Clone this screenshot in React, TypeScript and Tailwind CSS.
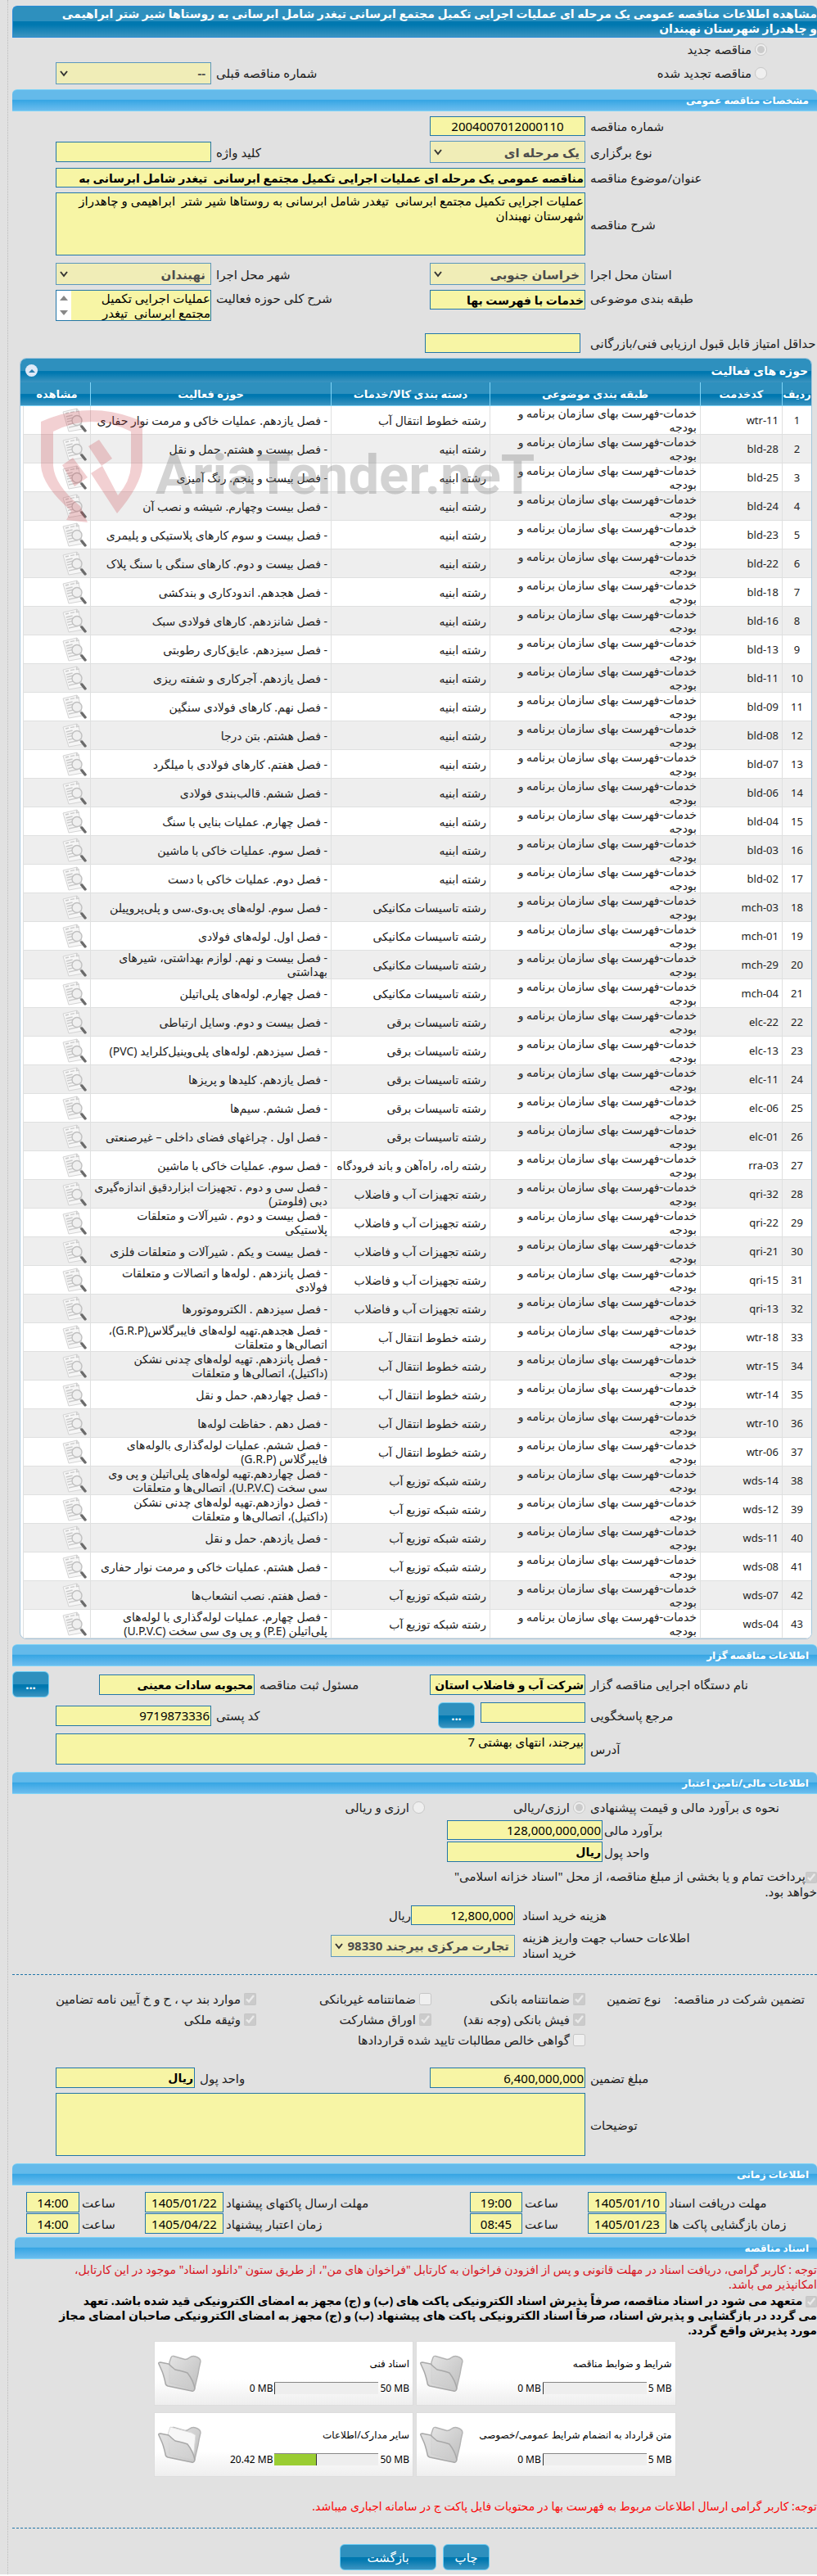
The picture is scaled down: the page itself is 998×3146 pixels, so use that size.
import { ReactNode, useId } from 'react'
import clsx from 'clsx'

interface IActivity {
  code: string
  category: string
  activity: string
}

interface IFolder {
  title: string
  used: number
  max: number
}

const BUILDING = 'رشته ابنیه'
const MECHANICAL = 'رشته تاسیسات مکانیکی'
const ELECTRICAL = 'رشته تاسیسات برقی'
const ROAD = 'رشته راه، راه‌آهن و باند فرودگاه'
const EQUIPMENT = 'رشته تجهیزات آب و فاضلاب'
const TRANSFER = 'رشته خطوط انتقال آب'
const NETWORK = 'رشته شبکه توزیع آب'

const activities: IActivity[] = [
  { code: 'wtr-11', category: TRANSFER, activity: '- فصل یازدهم. عملیات خاکی و مرمت نوار حفاری' },
  { code: 'bld-28', category: BUILDING, activity: '- فصل بیست و هشتم. حمل و نقل' },
  { code: 'bld-25', category: BUILDING, activity: '- فصل بیست و پنجم. رنگ آمیزی' },
  { code: 'bld-24', category: BUILDING, activity: '- فصل بیست وچهارم. شیشه و نصب آن' },
  { code: 'bld-23', category: BUILDING, activity: '- فصل بیست و سوم کارهای پلاستیکی و پلیمری' },
  { code: 'bld-22', category: BUILDING, activity: '- فصل بیست و دوم. کارهای سنگی با سنگ پلاک' },
  { code: 'bld-18', category: BUILDING, activity: '- فصل هجدهم. اندودکاری و بندکشی' },
  { code: 'bld-16', category: BUILDING, activity: '- فصل شانزدهم. کارهای فولادی سبک' },
  { code: 'bld-13', category: BUILDING, activity: '- فصل سیزدهم. عایق‌کاری رطوبتی' },
  { code: 'bld-11', category: BUILDING, activity: '- فصل یازدهم. آجرکاری و شفته ریزی' },
  { code: 'bld-09', category: BUILDING, activity: '- فصل نهم. کارهای فولادی سنگین' },
  { code: 'bld-08', category: BUILDING, activity: '- فصل هشتم. بتن درجا' },
  { code: 'bld-07', category: BUILDING, activity: '- فصل هفتم. کارهای فولادی با میلگرد' },
  { code: 'bld-06', category: BUILDING, activity: '- فصل ششم. قالب‌بندی فولادی' },
  { code: 'bld-04', category: BUILDING, activity: '- فصل چهارم. عملیات بنایی با سنگ' },
  { code: 'bld-03', category: BUILDING, activity: '- فصل سوم. عملیات خاکی با ماشین' },
  { code: 'bld-02', category: BUILDING, activity: '- فصل دوم. عملیات خاکی با دست' },
  { code: 'mch-03', category: MECHANICAL, activity: '- فصل سوم. لوله‌های پی.وی.سی و پلی‌پروپیلن' },
  { code: 'mch-01', category: MECHANICAL, activity: '- فصل اول. لوله‌های فولادی' },
  { code: 'mch-29', category: MECHANICAL, activity: '- فصل بیست و نهم. لوازم بهداشتی، شیرهای\nبهداشتی' },
  { code: 'mch-04', category: MECHANICAL, activity: '- فصل چهارم. لوله‌های پلی‌اتیلن' },
  { code: 'elc-22', category: ELECTRICAL, activity: '- فصل بیست و دوم. وسایل ارتباطی' },
  { code: 'elc-13', category: ELECTRICAL, activity: '- فصل سیزدهم. لوله‌های پلی‌وینیل‌کلراید (PVC)' },
  { code: 'elc-11', category: ELECTRICAL, activity: '- فصل یازدهم. کلیدها و پریزها' },
  { code: 'elc-06', category: ELECTRICAL, activity: '- فصل ششم. سیم‌ها' },
  { code: 'elc-01', category: ELECTRICAL, activity: '- فصل اول . چراغهای فضای داخلی – غیرصنعتی' },
  { code: 'rra-03', category: ROAD, activity: '- فصل سوم. عملیات خاکی با ماشین' },
  { code: 'qri-32', category: EQUIPMENT, activity: '- فصل سی و دوم . تجهیزات ابزاردقیق اندازه‌گیری\nدبی (فلومتر)' },
  { code: 'qri-22', category: EQUIPMENT, activity: '- فصل بیست و دوم . شیرآلات و متعلقات\nپلاستیکی' },
  { code: 'qri-21', category: EQUIPMENT, activity: '- فصل بیست و یکم . شیرآلات و متعلقات فلزی' },
  { code: 'qri-15', category: EQUIPMENT, activity: '- فصل پانزدهم . لوله‌ها و اتصالات و متعلقات\nفولادی' },
  { code: 'qri-13', category: EQUIPMENT, activity: '- فصل سیزدهم . الکتروموتورها' },
  { code: 'wtr-18', category: TRANSFER, activity: '- فصل هجدهم.تهیه لوله‌های فایبرگلاس(G.R.P)،\nاتصالی‌ها و متعلقات' },
  { code: 'wtr-15', category: TRANSFER, activity: '- فصل پانزدهم. تهیه لوله‌های چدنی نشکن\n(داکتیل)، اتصالی‌ها و متعلقات' },
  { code: 'wtr-14', category: TRANSFER, activity: '- فصل چهاردهم. حمل و نقل' },
  { code: 'wtr-10', category: TRANSFER, activity: '- فصل دهم . حفاظت لوله‌ها' },
  { code: 'wtr-06', category: TRANSFER, activity: '- فصل ششم. عملیات لوله‌گذاری بالوله‌های\nفایبرگلاس (G.R.P)' },
  { code: 'wds-14', category: NETWORK, activity: '- فصل چهاردهم.تهیه لوله‌های پلی‌اتیلن و پی وی\nسی سخت (U.P.V.C)، اتصالی‌ها و متعلقات' },
  { code: 'wds-12', category: NETWORK, activity: '- فصل دوازدهم.تهیه لوله‌های چدنی نشکن\n(داکتیل)، اتصالی‌ها و متعلقات' },
  { code: 'wds-11', category: NETWORK, activity: '- فصل یازدهم. حمل و نقل' },
  { code: 'wds-08', category: NETWORK, activity: '- فصل هشتم. عملیات خاکی و مرمت نوار حفاری' },
  { code: 'wds-07', category: NETWORK, activity: '- فصل هفتم. نصب انشعاب‌ها' },
  { code: 'wds-04', category: NETWORK, activity: '- فصل چهارم. عملیات لوله‌گذاری با لوله‌های\nپلی‌اتیلن (P.E) و پی وی سی سخت (U.P.V.C)' },
]

const folders: IFolder[] = [
  { title: 'شرایط و ضوابط مناقصه', used: 0, max: 5 },
  { title: 'اسناد فنی', used: 0, max: 50 },
  { title: 'متن قرارداد به انضمام شرایط عمومی/خصوصی', used: 0, max: 5 },
  { title: 'سایر مدارک/اطلاعات', used: 20.42, max: 50 },
]

const darkBar = 'bg-[linear-gradient(#2e90be_50%,#0078b0_50%,#0078b0_60%,#3c94c0)]'
const field = 'block w-full border border-[#2376a8] bg-[#f7f5a5] px-px text-black outline-none resize-none'
const formRow = 'grid grid-cols-[277px_190px_1fr_190px] items-center gap-x-1.5 pl-[53px]'

function SectionBar({ children }: { children: ReactNode }) {
  return (
    <h2 className="flex h-[27px] items-center rounded-t-md border-y border-[#7fd4f7] bg-[linear-gradient(#64baea_45%,#37a6e4_50%,#6cbdee)] pr-2.5 text-xs font-bold text-white">
      {children}
    </h2>
  )
}

function Label({ htmlFor, children }: { htmlFor?: string, children: ReactNode }) {
  return <label htmlFor={htmlFor} className="text-left whitespace-nowrap">{children}</label>
}

function TextField({ id, value = '', bold, className }: { id: string, value?: string, bold?: boolean, className?: string }) {
  return <input id={id} type="text" readOnly defaultValue={value} className={clsx(field, bold ? 'text-sm font-bold' : 'text-[15px]', className)} />
}

function SelectField({ id, value }: { id: string, value: string }) {
  return (
    <div className="relative">
      <select id={id} disabled className="block h-[27px] w-full appearance-none border border-[#5b97bd] bg-[#f0edb7] pr-1.5 pl-5 text-[15px] font-bold text-[#4d4d4d] opacity-100">
        <option>{value}</option>
      </select>
      <svg viewBox="0 0 12 8" className="pointer-events-none absolute top-2.5 left-1 h-2 w-3" fill="none" stroke="#333" strokeWidth="2">
        <path d="M2 1l4 5 4-5" />
      </svg>
    </div>
  )
}

function Choice({ type, name, checked, className, children }: { type: 'radio' | 'checkbox', name?: string, checked?: boolean, className?: string, children: ReactNode }) {
  const id = useId()
  return (
    <div className={clsx('flex items-center gap-1 whitespace-nowrap', className)}>
      <input id={id} type={type} name={name} disabled defaultChecked={checked} className="size-[15px] shrink-0" />
      <label htmlFor={id}>{children}</label>
    </div>
  )
}

function BlueButton({ className, children }: { className?: string, children: ReactNode }) {
  return (
    <button type="button" className={clsx('h-8 rounded-md border border-[#6ccdf5] text-[15px] text-white', darkBar, className)}>
      {children}
    </button>
  )
}

function ViewIcon() {
  return (
    <svg viewBox="0 0 30 30" className="h-[30px] w-[30px]">
      <path d="M1 5L18 1l2 3 5 22-17 3z" fill="#f6f6f6" stroke="#d4d4d4" strokeWidth="1" />
      <path d="M18 1l-1 4 4-1" fill="#ddd" stroke="#c4c4c4" strokeWidth=".8" />
      <path d="M4 7l4-1M10 5.600l5-1M4.600 11l8-2M5.500 14l8-2M6 17l6-1.400M7 20.500l6-1.400M8 24l11-2.400" stroke="#cacaca" strokeWidth="1.300" />
      <circle cx="18" cy="15.500" r="6" fill="#eee" fillOpacity=".8" stroke="#c0c0c0" strokeWidth="1.400" />
      <path d="M22 21l1.500 2" stroke="#aaa" strokeWidth="2" />
      <path d="M24 23l4 5" stroke="#6b6b6b" strokeWidth="3.400" strokeLinecap="round" />
    </svg>
  )
}

function FolderIcon({ filled }: { filled: boolean }) {
  return (
    <svg viewBox="0 0 54 46" className="h-[46px] w-[54px]" strokeLinejoin="round">
      <defs>
        <linearGradient id="folderBack" x1="0" y1="0" x2="1" y2="1">
          <stop offset="0" stopColor="#e4e4e4" />
          <stop offset="1" stopColor="#bdbdbd" />
        </linearGradient>
        <linearGradient id="folderFront" x1="0" y1="0" x2="1" y2="1">
          <stop offset="0" stopColor="#dedede" />
          <stop offset="1" stopColor="#c9c9c9" />
        </linearGradient>
      </defs>
      <path d="M14 9l2-6q1-2 3-1.500l14 4q3 0 5-2 4-3 8-1.500 6 2 6 6-2 8-3 15l-4 17q-1 3-4 2L14 34z" fill="url(#folderBack)" stroke="#b3b3b3" strokeWidth="1.400" />
      {filled && <path d="M12 10l3-9 26 7 5 3-3 30-28-6z" fill="#f7f7f7" stroke="#dadada" />}
      <path d="M1 11q-1-2 2-2l10 2q4 4 8 7 10 2 15 4 7 9 9 19-1 4-4 3L12 38q-3-1-3-4-2-9-4-14z" fill="url(#folderFront)" fillOpacity=".9" stroke="#a8a8a8" strokeWidth="1.500" />
    </svg>
  )
}

function Watermark() {
  return (
    <svg viewBox="0 0 620 150" className="pointer-events-none absolute top-[60px] left-6 h-[150px] w-[620px]">
      <g fill="#c8323c" fillOpacity=".23">
        <path d="M1 17Q63-11 125 17V71Q123 95 94 129L62 80 76 71 95 107Q110 90 111 71V29Q63 5 16 29V71Q18 95 49 120L58 140 32 137 38 126Q3 96 1 71z" />
        <path d="M59 47L72 39 88 62 75 71zM27 70L40 61 58 85 42 96z" />
      </g>
      <text x="141" y="105" direction="ltr" fontSize="67" fontWeight="bold" fill="#777" fillOpacity=".32" fontFamily="Liberation Sans Narrow, Roboto, sans-serif">AriaTender.neT</text>
    </svg>
  )
}

function ActivityTable() {
  const cell = 'border-b border-l border-[#dfe0e0] px-1'
  return (
    <div className="relative mr-1.5 ml-[9px] overflow-hidden rounded-lg border border-[#a5c6dc] bg-white">
      <div className={clsx('flex h-[29px] items-center justify-between pr-1 pl-1.5 text-sm font-bold text-white', darkBar)}>
        <h3>حوزه های فعالیت</h3>
        <button type="button" aria-label="بستن جدول" className="flex size-[15px] items-center justify-center rounded-full bg-[#dfeaf8]">
          <svg viewBox="0 0 8 4" className="h-1 w-2" fill="#2b7fae"><path d="M0 4l4-4 4 4z" /></svg>
        </button>
      </div>
      <div className={clsx('absolute top-[29px] left-0 h-[29px] w-1 border-b border-[#7fd4f7]', darkBar)} />
      <div className="pl-[3px]">
        <table className="w-full table-fixed border-separate border-spacing-0 text-sm leading-[17px] text-[#222]">
          <colgroup>
            <col className="w-9" />
            <col className="w-[100px]" />
            <col className="w-[257px]" />
            <col className="w-[194px]" />
            <col />
            <col className="w-[82px]" />
          </colgroup>
          <thead>
            <tr className="text-[13px] text-white">
              {['ردیف', 'کدخدمت', 'طبقه بندی موضوعی', 'دسته بندی کالا/خدمات', 'حوزه فعالیت', 'مشاهده'].map(title => (
                <th key={title} className={clsx('h-[29px] border-b border-l border-[#7fd4f7] whitespace-nowrap', darkBar)}>{title}</th>
              ))}
            </tr>
          </thead>
          <tbody>
            {activities.map((item, index) => (
              <tr key={item.code} className="h-[35px] odd:bg-white even:bg-[#eee]">
                <td className={clsx(cell, 'text-center text-[13px]')}>{index + 1}</td>
                <td className={clsx(cell, 'text-[13px]')}><bdi>{item.code}</bdi></td>
                <td className={clsx(cell, 'whitespace-nowrap')}>خدمات-فهرست بهای سازمان برنامه و<br />بودجه</td>
                <td className={clsx(cell, 'whitespace-nowrap')}>{item.category}</td>
                <td className={clsx(cell, 'whitespace-pre')}>{item.activity}</td>
                <td className={cell}><ViewIcon /></td>
              </tr>
            ))}
          </tbody>
        </table>
      </div>
      <Watermark />
    </div>
  )
}

function DateGroup({ id, label, date, time }: { id: string, label: string, date: string, time: string }) {
  return (
    <>
      <Label htmlFor={id}>{label}</Label>
      <TextField id={id} value={date} className="h-[25px] text-center" />
      <Label htmlFor={`${id}-time`}>ساعت</Label>
      <TextField id={`${id}-time`} value={time} className="h-[25px] text-center" />
    </>
  )
}

function FolderCard({ folder }: { folder: IFolder }) {
  return (
    <div className="flex h-[79px] items-center justify-between border border-[#ddd] bg-linear-to-b from-white from-60% to-[#eee] pr-1 pl-1">
      <div className="flex flex-col gap-3 pt-1 whitespace-nowrap">
        <h3 className="text-xs leading-5">{folder.title}</h3>
        <div className="flex items-center gap-0.5 text-xs leading-4">
          <bdi>{folder.max} MB</bdi>
          <div dir="ltr" className="h-[15px] w-[127px] border-t border-[#888] bg-[#eee]">
            <div className="h-full border-r border-[#333] bg-[#9acd32]" style={{ width: `${folder.used / folder.max * 100}%` }} />
          </div>
          <bdi>{folder.used} MB</bdi>
        </div>
      </div>
      <FolderIcon filled={folder.used > 0} />
    </div>
  )
}

export default function App() {
  return (
    <div dir="rtl" className="overflow-hidden bg-[#e1e1e1] pl-[9px] font-['Noto_Sans','DejaVu_Sans',sans-serif] text-[15px] leading-5 text-[#222]">
      <main className="border-l border-dotted border-[#bbb] pt-[7px] pb-[5px] pl-[5px]">
        <h1 className={clsx('h-[39px] rounded-t-md border border-r-0 border-[#2b8bd8] text-sm leading-[18px] font-bold whitespace-nowrap text-white', darkBar)}>
          مشاهده اطلاعات مناقصه عمومی یک مرحله ای عملیات اجرایی تکمیل مجتمع ابرسانی تیغدر شامل ابرسانی به روستاها شیر شتر ابراهیمی<br />و چاهدراز شهرستان نهبندان
        </h1>

        <div className="mb-1.5 flex flex-col gap-px">
          <Choice type="radio" name="kind" checked className="h-7 pr-[61px]">مناقصه جدید</Choice>
          <div className={clsx(formRow, 'h-7')}>
            <Choice type="radio" name="kind" className="col-span-2 pr-[61px]">مناقصه تجدید شده</Choice>
            <Label htmlFor="previous">شماره مناقصه قبلی</Label>
            <SelectField id="previous" value="--" />
          </div>
        </div>

        <SectionBar>مشخصات مناقصه عمومی</SectionBar>
        <div className="my-1.5 flex flex-col gap-1.5">
          <div className={formRow}>
            <Label htmlFor="number">شماره مناقصه</Label>
            <TextField id="number" value="2004007012000110" className="h-6 text-center" />
          </div>
          <div className={formRow}>
            <Label htmlFor="method">نوع برگزاری</Label>
            <SelectField id="method" value="یک مرحله ای" />
            <Label htmlFor="keyword">کلید واژه</Label>
            <TextField id="keyword" className="h-[25px]" />
          </div>
          <div className={formRow}>
            <Label htmlFor="subject">عنوان/موضوع مناقصه</Label>
            <TextField id="subject" bold value="مناقصه عمومی یک مرحله ای عملیات اجرایی تکمیل مجتمع ابرسانی  تیغدر شامل ابرسانی به" className="col-span-3 h-6" />
          </div>
          <div className={formRow}>
            <Label htmlFor="description">شرح مناقصه</Label>
            <textarea id="description" readOnly className={clsx(field, 'col-span-3 h-[77px] text-[15px] leading-[18px]')} defaultValue={'عملیات اجرایی تکمیل مجتمع ابرسانی  تیغدر شامل ابرسانی به روستاها شیر شتر  ابراهیمی و چاهدراز\nشهرستان نهبندان'} />
          </div>
          <div className={clsx(formRow, 'mt-[3px]')}>
            <Label htmlFor="province">استان محل اجرا</Label>
            <SelectField id="province" value="خراسان جنوبی" />
            <Label htmlFor="city">شهر محل اجرا</Label>
            <SelectField id="city" value="نهبندان" />
          </div>
          <div className={clsx(formRow, 'items-start')}>
            <Label htmlFor="class">طبقه بندی موضوعی</Label>
            <TextField id="class" bold value="خدمات با فهرست بها" className="h-6" />
            <Label htmlFor="scope">شرح کلی حوزه فعالیت</Label>
            <div className="flex h-[38px] border border-[#2376a8] bg-[#f7f5a5]">
              <textarea id="scope" readOnly className="min-w-0 flex-1 resize-none overflow-hidden text-[15px] leading-[18px] text-black outline-none" defaultValue={'عملیات اجرایی تکمیل\nمجتمع ابرسانی  تیغدر'} />
              <div className="flex w-[18px] flex-col items-center justify-between bg-white py-1.5">
                <svg viewBox="0 0 10 6" className="h-1.5 w-2.5" fill="#888"><path d="M0 6l5-6 5 6z" /></svg>
                <svg viewBox="0 0 10 6" className="h-1.5 w-2.5" fill="#888"><path d="M0 0l5 6 5-6z" /></svg>
              </div>
            </div>
          </div>
          <div className="mt-[9px] grid grid-cols-[277px_190px] items-center gap-x-3">
            <Label htmlFor="score">حداقل امتیاز قابل قبول ارزیابی فنی/بازرگانی</Label>
            <TextField id="score" className="h-6" />
          </div>
        </div>

        <ActivityTable />

        <div className="mt-1.5">
          <SectionBar>اطلاعات مناقصه گزار</SectionBar>
        </div>
        <div className="mt-1.5 mb-[9px] flex flex-col gap-1.5">
          <div className="flex items-center gap-2">
            <div className={clsx(formRow, 'flex-1 pl-0')}>
              <Label htmlFor="agency">نام دستگاه اجرایی مناقصه گزار</Label>
              <TextField id="agency" bold value="شرکت آب و فاضلاب استان" className="h-[25px]" />
              <Label htmlFor="registrar">مسئول ثبت مناقصه</Label>
              <TextField id="registrar" bold value="محبوبه سادات معینی" className="h-[25px]" />
            </div>
            <BlueButton className="w-[45px] font-bold">...</BlueButton>
          </div>
          <div className={formRow}>
            <Label htmlFor="contact">مرجع پاسخگویی</Label>
            <div className="flex gap-[7px]">
              <TextField id="contact" className="h-[25px] flex-1" />
              <BlueButton className="ml-2.5 w-[45px] shrink-0 font-bold">...</BlueButton>
            </div>
            <Label htmlFor="postal">کد پستی</Label>
            <TextField id="postal" value="9719873336" className="h-[25px]" />
          </div>
          <div className={formRow}>
            <Label htmlFor="address">آدرس</Label>
            <textarea id="address" readOnly className={clsx(field, 'col-span-3 h-[38px] text-[15px] leading-[18px]')} defaultValue="بیرجند، انتهای بهشتی 7" />
          </div>
        </div>

        <SectionBar>اطلاعات مالی/تامین اعتبار</SectionBar>
        <div className={clsx(formRow, 'h-8')}>
          <span className="text-left whitespace-nowrap">نحوه ی برآورد مالی و قیمت پیشنهادی</span>
          <Choice type="radio" name="currency" checked>ارزی/ریالی</Choice>
          <Choice type="radio" name="currency">ارزی و ریالی</Choice>
        </div>
        <div className="grid grid-cols-[260px_190px] items-center gap-x-0.5 gap-y-0.5">
          <Label htmlFor="estimate">برآورد مالی</Label>
          <TextField id="estimate" value="128,000,000,000" className="h-6" />
          <Label htmlFor="unit">واحد پول</Label>
          <TextField id="unit" bold value="ریال" className="h-[25px]" />
        </div>
        <p className="mt-2 leading-[19px] whitespace-nowrap">
          <input id="treasury" type="checkbox" disabled defaultChecked className="size-3.5 align-middle" />
          <label htmlFor="treasury">پرداخت تمام و یا بخشی از مبلغ مناقصه، از محل "اسناد خزانه اسلامی"<br />خواهد بود.</label>
        </p>
        <div className="mt-[7px] grid grid-cols-[360px_225px] items-center gap-x-[9px] gap-y-1.5">
          <Label htmlFor="cost">هزینه خرید اسناد</Label>
          <div className="flex items-center">
            <div className="w-[127px]"><TextField id="cost" value="12,800,000" className="h-6" /></div>
            <span>ریال</span>
          </div>
          <label htmlFor="account" className="text-left leading-[19px] whitespace-nowrap">اطلاعات حساب جهت واریز هزینه<br />خرید اسناد</label>
          <SelectField id="account" value="تجارت مرکزی بیرجند 098330" />
        </div>

        <div className="mt-4 border-t border-dashed border-[#2376a8]" />
        <div className="mt-[19px] grid grid-cols-[258px_198px_1fr_298px] gap-y-[5px] pr-[15px]">
          <div className="flex gap-4 whitespace-nowrap">
            <span>تضمین شرکت در مناقصه:</span>
            <span>نوع تضمین</span>
          </div>
          <Choice type="checkbox" checked className="pr-2.5">ضمانتنامه بانکی</Choice>
          <Choice type="checkbox">ضمانتنامه غیربانکی</Choice>
          <Choice type="checkbox" checked>موارد بند پ ، ح و خ آیین نامه تضامین</Choice>
          <Choice type="checkbox" checked className="col-start-2 pr-2.5">فیش بانکی (وجه نقد)</Choice>
          <Choice type="checkbox" checked>اوراق مشارکت</Choice>
          <Choice type="checkbox" checked>وثیقه ملکی</Choice>
          <Choice type="checkbox" className="col-span-2 col-start-2 pr-2.5">گواهی خالص مطالبات تایید شده قراردادها</Choice>
        </div>

        <div className="mt-6 mb-[9px] flex flex-col gap-1.5">
          <div className="grid grid-cols-[277px_190px_1fr_170px] items-center gap-x-1.5 pl-[53px]">
            <Label htmlFor="guarantee">مبلغ تضمین</Label>
            <TextField id="guarantee" value="6,400,000,000" className="h-[25px]" />
            <Label htmlFor="guarantee-unit">واحد پول</Label>
            <TextField id="guarantee-unit" bold value="ریال" className="h-[25px]" />
          </div>
          <div className={formRow}>
            <Label htmlFor="notes">توضیحات</Label>
            <textarea id="notes" readOnly className={clsx(field, 'col-span-3 h-[77px]')} />
          </div>
        </div>

        <SectionBar>اطلاعات زمانی</SectionBar>
        <div className="mt-2 mb-1 grid grid-cols-[181px_96px_74px_64px_1fr_96px_74px_65px] items-center gap-x-[3px] gap-y-px pl-[17px]">
          <DateGroup id="receive" label="مهلت دریافت اسناد" date="1405/01/10" time="19:00" />
          <DateGroup id="send" label="مهلت ارسال پاکتهای پیشنهاد" date="1405/01/22" time="14:00" />
          <DateGroup id="open" label="زمان بازگشایی پاکت ها" date="1405/01/23" time="08:45" />
          <DateGroup id="valid" label="زمان اعتبار پیشنهاد" date="1405/04/22" time="14:00" />
        </div>

        <div className="ml-[3px]">
          <SectionBar>اسناد مناقصه</SectionBar>
        </div>
        <p className="mt-1 text-sm leading-[18px] whitespace-nowrap text-[#d8121c]">
          توجه : کاربر گرامی، دریافت اسناد در مهلت قانونی و پس از افزودن فراخوان به کارتابل "فراخوان های من"، از طریق ستون "دانلود اسناد" موجود در این کارتابل،<br />امکانپذیر می باشد.
        </p>
        <p className="mt-0.5 text-sm leading-[18px] font-bold whitespace-nowrap text-black">
          <input id="commit" type="checkbox" disabled defaultChecked className="size-3.5 align-middle" />{' '}
          <label htmlFor="commit">متعهد می شود در اسناد مناقصه، صرفاً پذیرش اسناد الکترونیکی پاکت های (ب) و (ج) مجهز به امضای الکترونیکی قید شده باشد. تعهد<br />می گردد در بازگشایی و پذیرش اسناد، صرفاً اسناد الکترونیکی پاکت های پیشنهاد (ب) و (ج) مجهز به امضای الکترونیکی صاحبان امضای مجاز<br />مورد پذیرش واقع گردد.</label>
        </p>

        <div className="mx-auto mt-1 grid max-w-[638px] grid-cols-2 gap-x-[3px] gap-y-2 text-black">
          {folders.map(folder => <FolderCard key={folder.title} folder={folder} />)}
        </div>

        <p className="mt-[26px] text-sm leading-5 text-[#fb0808]">توجه: کاربر گرامی ارسال اطلاعات مربوط به فهرست بها در محتویات فایل پاکت ج در سامانه اجباری میباشد.</p>
        <div className="mt-4 border-t border-dashed border-[#2376a8]" />
        <div className="mt-[19px] flex justify-center gap-2">
          <BlueButton className="w-[57px]">چاپ</BlueButton>
          <BlueButton className="w-[118px]">بازگشت</BlueButton>
        </div>
      </main>
    </div>
  )
}
